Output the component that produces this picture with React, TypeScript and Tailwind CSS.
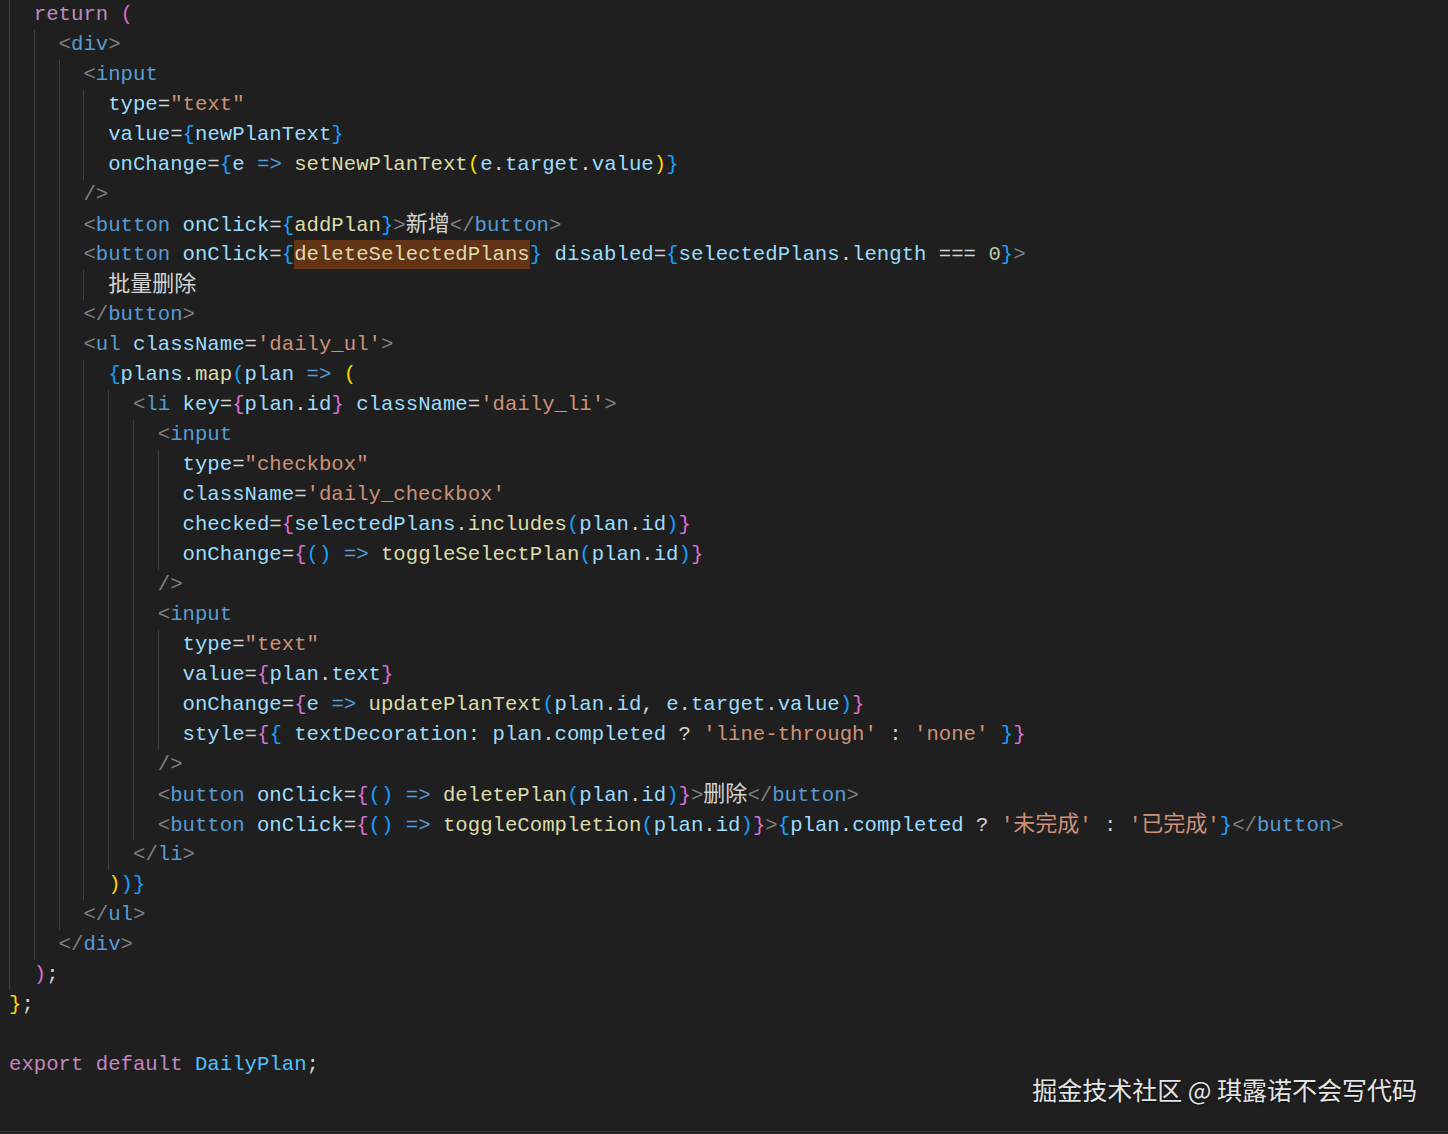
import React from 'react';

type Tok = [string, string];

// token colours, VS Code Dark Modern
const C: Record<string, string> = {
  k: 'text-[#c586c0]',
  t: 'text-[#808080]',
  n: 'text-[#569cd6]',
  a: 'text-[#9cdcfe]',
  s: 'text-[#ce9178]',
  p: 'text-[#d4d4d4]',
  f: 'text-[#dcdcaa]',
  g: 'text-[#ffd700]',
  o: 'text-[#da70d6]',
  b: 'text-[#179fff]',
  num: 'text-[#b5cea8]',
  c: 'text-[#4fc1ff]',
  h: 'text-[#dcdcaa] bg-[#633315] inline-block leading-[29px]',
  cj: "text-[#d4d4d4] font-['Noto_Sans_CJK_SC',sans-serif] text-[22px] leading-none",
  cs: "text-[#ce9178] font-['Noto_Sans_CJK_SC',sans-serif] text-[22px] leading-none",
};

const lines: [number, Tok[]][] = [
  [2, [['k', 'return'], ['p', ' '], ['o', '(']]],
  [4, [['t', '<'], ['n', 'div'], ['t', '>']]],
  [6, [['t', '<'], ['n', 'input']]],
  [8, [['a', 'type'], ['p', '='], ['s', '"text"']]],
  [8, [['a', 'value'], ['p', '='], ['b', '{'], ['a', 'newPlanText'], ['b', '}']]],
  [8, [['a', 'onChange'], ['p', '='], ['b', '{'], ['a', 'e'], ['p', ' '], ['n', '=>'], ['p', ' '], ['f', 'setNewPlanText'], ['g', '('], ['a', 'e'], ['p', '.'], ['a', 'target'], ['p', '.'], ['a', 'value'], ['g', ')'], ['b', '}']]],
  [6, [['t', '/>']]],
  [6, [['t', '<'], ['n', 'button'], ['p', ' '], ['a', 'onClick'], ['p', '='], ['b', '{'], ['f', 'addPlan'], ['b', '}'], ['t', '>'], ['cj', '新增'], ['t', '</'], ['n', 'button'], ['t', '>']]],
  [6, [['t', '<'], ['n', 'button'], ['p', ' '], ['a', 'onClick'], ['p', '='], ['b', '{'], ['h', 'deleteSelectedPlans'], ['b', '}'], ['p', ' '], ['a', 'disabled'], ['p', '='], ['b', '{'], ['a', 'selectedPlans'], ['p', '.'], ['a', 'length'], ['p', ' === '], ['num', '0'], ['b', '}'], ['t', '>']]],
  [8, [['cj', '批量删除']]],
  [6, [['t', '</'], ['n', 'button'], ['t', '>']]],
  [6, [['t', '<'], ['n', 'ul'], ['p', ' '], ['a', 'className'], ['p', '='], ['s', "'daily_ul'"], ['t', '>']]],
  [8, [['b', '{'], ['a', 'plans'], ['p', '.'], ['f', 'map'], ['b', '('], ['a', 'plan'], ['p', ' '], ['n', '=>'], ['p', ' '], ['g', '(']]],
  [10, [['t', '<'], ['n', 'li'], ['p', ' '], ['a', 'key'], ['p', '='], ['o', '{'], ['a', 'plan'], ['p', '.'], ['a', 'id'], ['o', '}'], ['p', ' '], ['a', 'className'], ['p', '='], ['s', "'daily_li'"], ['t', '>']]],
  [12, [['t', '<'], ['n', 'input']]],
  [14, [['a', 'type'], ['p', '='], ['s', '"checkbox"']]],
  [14, [['a', 'className'], ['p', '='], ['s', "'daily_checkbox'"]]],
  [14, [['a', 'checked'], ['p', '='], ['o', '{'], ['a', 'selectedPlans'], ['p', '.'], ['f', 'includes'], ['b', '('], ['a', 'plan'], ['p', '.'], ['a', 'id'], ['b', ')'], ['o', '}']]],
  [14, [['a', 'onChange'], ['p', '='], ['o', '{'], ['b', '()'], ['p', ' '], ['n', '=>'], ['p', ' '], ['f', 'toggleSelectPlan'], ['b', '('], ['a', 'plan'], ['p', '.'], ['a', 'id'], ['b', ')'], ['o', '}']]],
  [12, [['t', '/>']]],
  [12, [['t', '<'], ['n', 'input']]],
  [14, [['a', 'type'], ['p', '='], ['s', '"text"']]],
  [14, [['a', 'value'], ['p', '='], ['o', '{'], ['a', 'plan'], ['p', '.'], ['a', 'text'], ['o', '}']]],
  [14, [['a', 'onChange'], ['p', '='], ['o', '{'], ['a', 'e'], ['p', ' '], ['n', '=>'], ['p', ' '], ['f', 'updatePlanText'], ['b', '('], ['a', 'plan'], ['p', '.'], ['a', 'id'], ['p', ', '], ['a', 'e'], ['p', '.'], ['a', 'target'], ['p', '.'], ['a', 'value'], ['b', ')'], ['o', '}']]],
  [14, [['a', 'style'], ['p', '='], ['o', '{'], ['b', '{'], ['p', ' '], ['a', 'textDecoration'], ['p', ': '], ['a', 'plan'], ['p', '.'], ['a', 'completed'], ['p', ' ? '], ['s', "'line-through'"], ['p', ' : '], ['s', "'none'"], ['p', ' '], ['b', '}'], ['o', '}']]],
  [12, [['t', '/>']]],
  [12, [['t', '<'], ['n', 'button'], ['p', ' '], ['a', 'onClick'], ['p', '='], ['o', '{'], ['b', '()'], ['p', ' '], ['n', '=>'], ['p', ' '], ['f', 'deletePlan'], ['b', '('], ['a', 'plan'], ['p', '.'], ['a', 'id'], ['b', ')'], ['o', '}'], ['t', '>'], ['cj', '删除'], ['t', '</'], ['n', 'button'], ['t', '>']]],
  [12, [['t', '<'], ['n', 'button'], ['p', ' '], ['a', 'onClick'], ['p', '='], ['o', '{'], ['b', '()'], ['p', ' '], ['n', '=>'], ['p', ' '], ['f', 'toggleCompletion'], ['b', '('], ['a', 'plan'], ['p', '.'], ['a', 'id'], ['b', ')'], ['o', '}'], ['t', '>'], ['b', '{'], ['a', 'plan'], ['p', '.'], ['a', 'completed'], ['p', ' ? '], ['s', "'"], ['cs', '未完成'], ['s', "'"], ['p', ' : '], ['s', "'"], ['cs', '已完成'], ['s', "'"], ['b', '}'], ['t', '</'], ['n', 'button'], ['t', '>']]],
  [10, [['t', '</'], ['n', 'li'], ['t', '>']]],
  [8, [['g', ')'], ['b', ')'], ['b', '}']]],
  [6, [['t', '</'], ['n', 'ul'], ['t', '>']]],
  [4, [['t', '</'], ['n', 'div'], ['t', '>']]],
  [2, [['o', ')'], ['p', ';']]],
  [0, [['g', '}'], ['p', ';']]],
  [0, []],
  [0, [['k', 'export'], ['p', ' '], ['k', 'default'], ['p', ' '], ['c', 'DailyPlan'], ['p', ';']]],
];

const Line: React.FC<{ indent: number; toks: Tok[] }> = ({ indent, toks }) => (
  <div className="flex h-[30px] items-center whitespace-pre">
    {Array.from({ length: indent / 2 }).map((_, i) => (
      <span key={i} className="w-[24.8px] self-stretch shrink-0 border-l border-[#404040]" />
    ))}
    <span className="leading-[30px]">
      {toks.map(([c, s], i) => (
        <span key={i} className={C[c]}>
          {s}
        </span>
      ))}
    </span>
  </div>
);

export default function App() {
  return (
    <div className="relative w-[1448px] h-[1134px] overflow-hidden bg-[#1f1f1f]">
      <div className="h-[1132px] border-b border-[#3a3a3a] pl-[9px] font-['Liberation_Mono','Noto_Sans_CJK_SC',monospace] text-[20.67px]">
        {lines.map(([ind, toks], i) => (
          <Line key={i} indent={ind} toks={toks} />
        ))}
      </div>

      {/* watermark */}
      <div className="absolute right-[31px] top-[1073px] font-['Noto_Sans_CJK_SC',sans-serif] text-[25px] leading-[32px] text-[#e4e4e4] [text-shadow:0_1px_2px_rgba(0,0,0,0.7)]">
        掘金技术社区 @ 琪露诺不会写代码
      </div>
    </div>
  );
}
